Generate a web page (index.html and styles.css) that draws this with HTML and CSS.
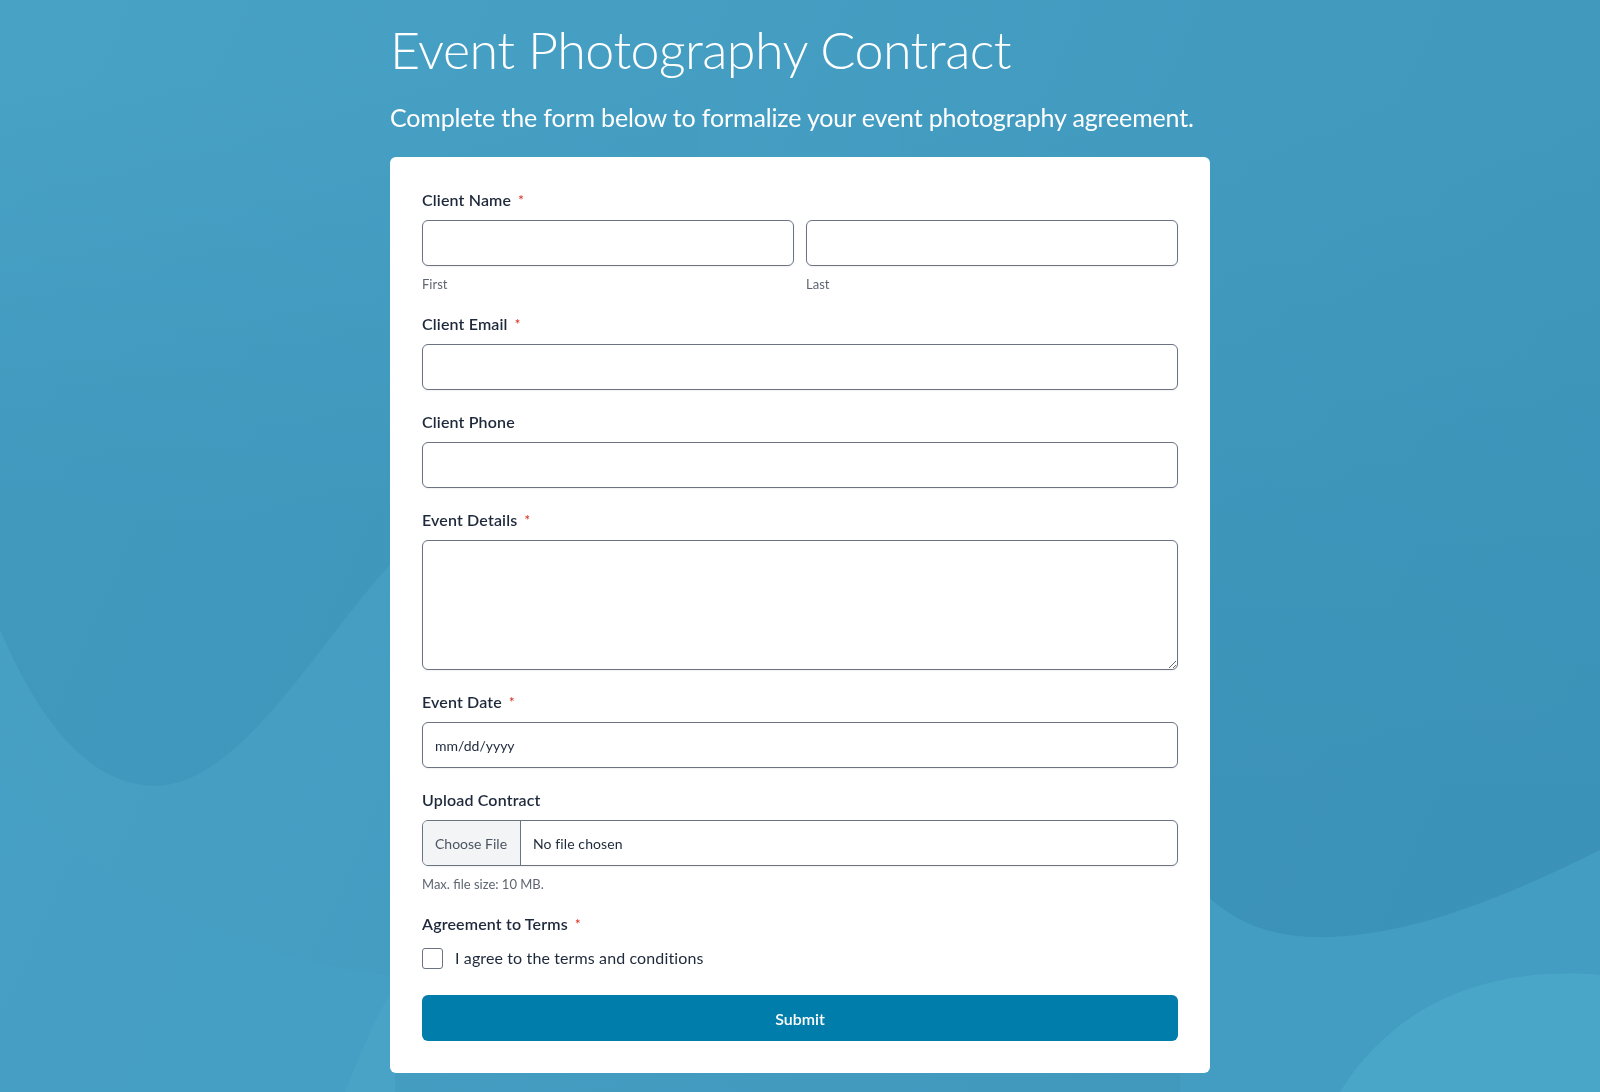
FILE: index.html
```html
<!DOCTYPE html>
<html lang="en">
<head>
  <meta charset="UTF-8">
  <meta name="viewport" content="width=device-width, initial-scale=1.0">
  <title>Event Photography Contract</title>
  <link rel="stylesheet" href="styles.css">
</head>
<body>
  <!-- Background shapes -->
  <svg class="backdrop" viewBox="0 0 1600 1092" preserveAspectRatio="none" aria-hidden="true">
    <defs>
      <linearGradient id="base" x1="0" y1="0" x2="1600" y2="700" gradientUnits="userSpaceOnUse">
        <stop offset="0" stop-color="#48a2c6"/>
        <stop offset="1" stop-color="#3f97bc"/>
      </linearGradient>
      <linearGradient id="fadeDown" x1="0" y1="80" x2="0" y2="520" gradientUnits="userSpaceOnUse">
        <stop offset="0" stop-color="#3b92b8" stop-opacity="0"/>
        <stop offset="1" stop-color="#3b92b8" stop-opacity="0.55"/>
      </linearGradient>
      <linearGradient id="fadeRight" x1="0" y1="100" x2="0" y2="800" gradientUnits="userSpaceOnUse">
        <stop offset="0" stop-color="#3a90b6" stop-opacity="0"/>
        <stop offset="1" stop-color="#3a90b6" stop-opacity="0.7"/>
      </linearGradient>
    </defs>
    <rect width="1600" height="1092" fill="url(#base)"/>
    <path d="M0 0 H700 V565 L390 565 C320 640 240 786 155 786 C80 786 30 700 0 630 Z" fill="url(#fadeDown)"/>
    <path d="M900 0 H1600 V850 C1500 900 1400 940 1310 937 C1240 934 1210 900 1180 870 L900 870 Z" fill="url(#fadeRight)"/>
    <path d="M0 780 C100 900 260 960 390 975 L390 1092 H0 Z" fill="#469fc4" opacity="0.6"/>
    <path d="M1180 870 C1210 900 1240 934 1310 937 C1400 940 1500 900 1600 850 V1092 H1180 Z" fill="#439cc1"/>
    <path d="M1600 975 C1480 965 1390 1010 1340 1092 H1600 Z" fill="#4aa6c9"/>
    <path d="M345 1092 C365 1040 380 1010 395 985 V1092 Z" fill="#48a3c7"/>
  </svg>

  <div class="page">
    <h1>Event Photography Contract</h1>
    <p class="intro">Complete the form below to formalize your event photography agreement.</p>

    <form class="card" onsubmit="return false">
      <!-- Client Name -->
      <div class="field">
        <label class="label">Client Name <span class="req">*</span></label>
        <div class="name-row">
          <div class="name-part">
            <input type="text" class="input">
            <span class="sublabel">First</span>
          </div>
          <div class="name-part">
            <input type="text" class="input">
            <span class="sublabel">Last</span>
          </div>
        </div>
      </div>

      <div class="field">
        <label class="label">Client Email <span class="req">*</span></label>
        <input type="email" class="input">
      </div>

      <div class="field">
        <label class="label">Client Phone</label>
        <input type="tel" class="input">
      </div>

      <div class="field">
        <label class="label">Event Details <span class="req">*</span></label>
        <textarea class="input textarea"></textarea>
      </div>

      <div class="field">
        <label class="label">Event Date <span class="req">*</span></label>
        <div class="input date-input">mm/dd/yyyy</div>
      </div>

      <div class="field">
        <label class="label">Upload Contract</label>
        <div class="input file-input">
          <span class="file-btn">Choose File</span>
          <span class="file-name">No file chosen</span>
        </div>
        <span class="sublabel file-note">Max. file size: 10 MB.</span>
      </div>

      <div class="field">
        <label class="label">Agreement to Terms <span class="req">*</span></label>
        <label class="check-row">
          <span class="checkbox"></span>
          I agree to the terms and conditions
        </label>
      </div>

      <button type="submit" class="submit">Submit</button>
    </form>
  </div>
</body>
</html>
```

FILE: styles.css
```css
html, body {
  margin: 0;
  padding: 0;
}

body {
  font-family: Lato, "Open Sans", sans-serif;
  background-color: #469fc4;
  color: #1e293b;
  min-height: 1092px;
}

.backdrop {
  position: fixed;
  top: 0;
  left: 0;
  width: 100%;
  height: 100%;
  z-index: 0;
}

.page {
  position: relative;
  z-index: 1;
  width: 820px;
  margin: 0 auto;
  padding-top: 18px;
}

h1 {
  margin: 0;
  color: white;
  font-size: 52px;
  font-weight: 300;
  letter-spacing: -0.55px;
  line-height: 62px;
}

.intro {
  margin: 21px 0 24px;
  color: white;
  font-size: 25px;
  letter-spacing: -0.15px;
  line-height: 32px;
}

.card {
  background-color: white;
  border-radius: 6px;
  padding: 31px 32px 32px;
}

.field {
  margin-bottom: 20px;
}

.label {
  display: block;
  font-size: 16px;
  font-weight: 600;
  letter-spacing: 0.15px;
  line-height: 24px;
  margin-bottom: 8px;
  color: #1e293b;
}

.req {
  color: #d93a2b;
  font-size: 13px;
  margin-left: 3px;
  vertical-align: 1px;
}

.input {
  display: block;
  box-sizing: border-box;
  width: 100%;
  height: 46px;
  border: 1px solid #6b7280;
  border-radius: 6px;
  background: white;
  box-shadow: 0 1px 2px rgba(0, 0, 0, 0.06);
  font-family: inherit;
  font-size: 14px;
  color: #1e293b;
  margin: 0;
}

.name-row {
  display: flex;
  gap: 12px;
}

.name-part {
  flex: 1;
}

.sublabel {
  display: block;
  margin-top: 10px;
  font-size: 13px;
  line-height: 16px;
  color: #5f6672;
}

.file-note {
  margin-bottom: 2px;
}

.textarea {
  height: 130px;
  resize: vertical;
  padding: 12px;
}

.date-input {
  display: flex;
  align-items: center;
  padding: 0 12px;
}

.file-input {
  display: flex;
  align-items: stretch;
  overflow: hidden;
}

.file-btn {
  display: flex;
  align-items: center;
  padding: 0 13px 0 12px;
  background-color: #f3f4f6;
  border-right: 1px solid #6b7280;
  color: #4b5563;
}

.file-name {
  display: flex;
  align-items: center;
  padding-left: 12px;
  letter-spacing: 0.1px;
}

.check-row {
  display: flex;
  align-items: center;
  gap: 12px;
  font-size: 16px;
  letter-spacing: 0.12px;
  color: #1e293b;
  line-height: 28px;
}

.checkbox {
  display: inline-block;
  box-sizing: border-box;
  width: 21px;
  height: 21px;
  border: 1px solid #6b7280;
  border-radius: 3px;
}

.submit {
  display: block;
  width: 100%;
  height: 46px;
  margin-top: 23px;
  background-color: #007dab;
  color: white;
  border: none;
  border-radius: 6px;
  font-family: inherit;
  font-size: 16px;
  font-weight: 600;
  cursor: pointer;
}
```
